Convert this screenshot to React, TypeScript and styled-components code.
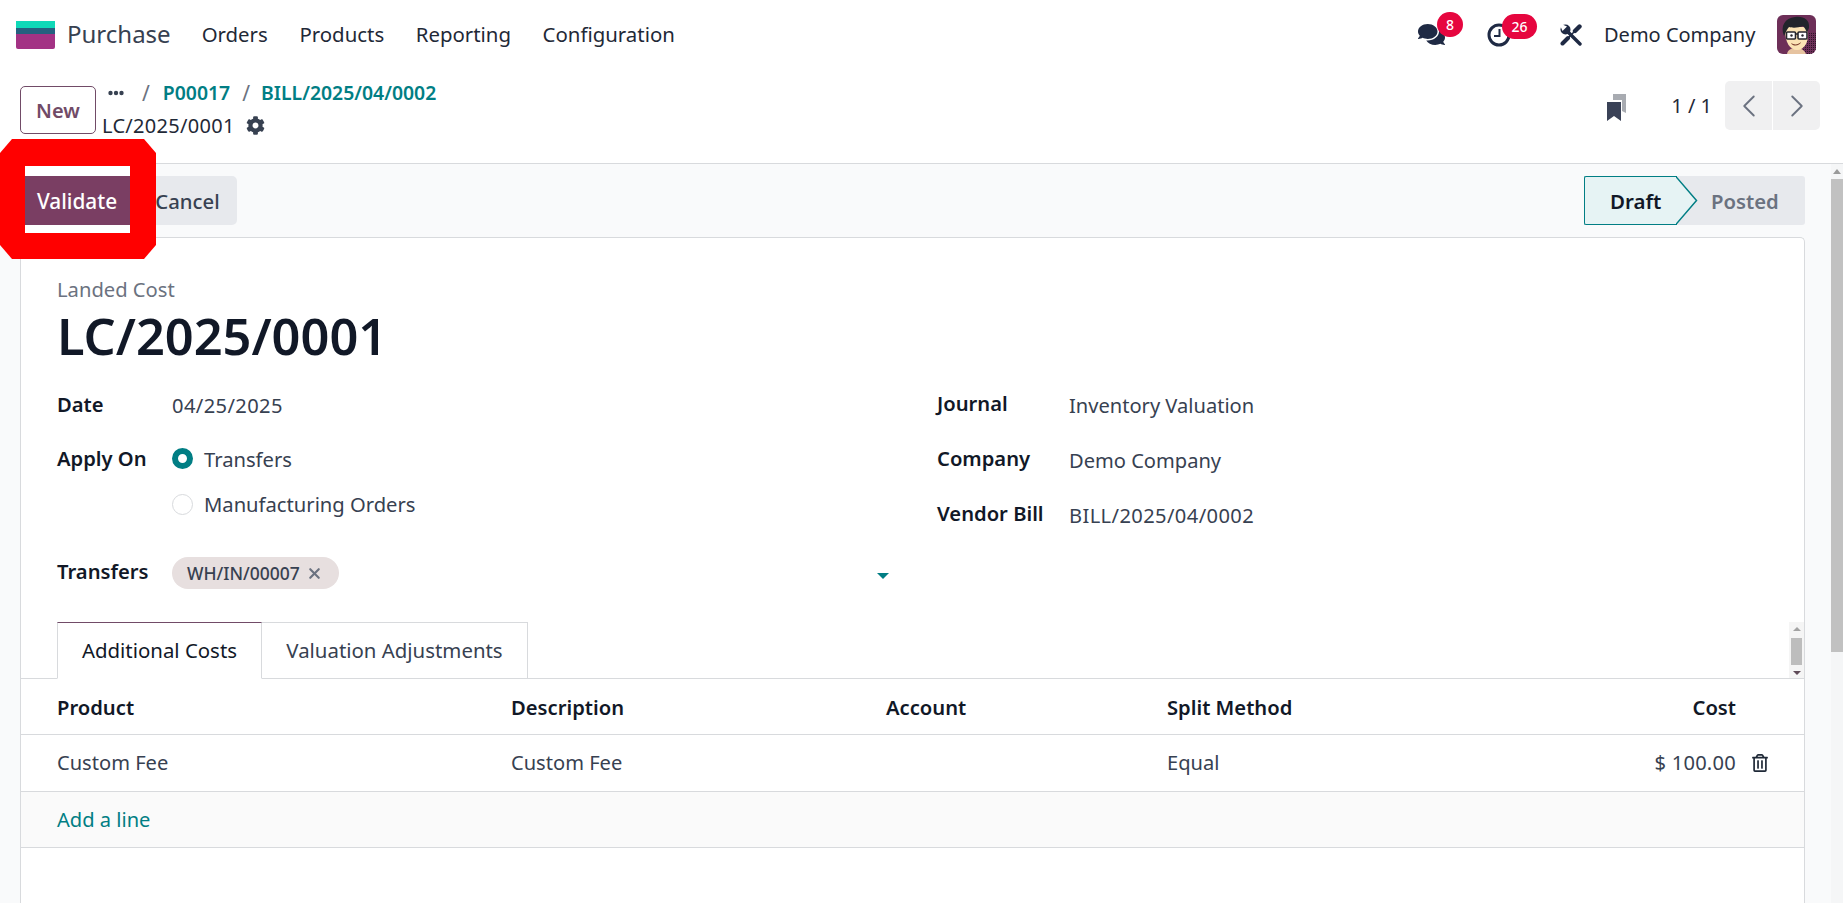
import React from "react";
import styled, { createGlobalStyle } from "styled-components";
import { FaComments, FaCog, FaRegTrashAlt } from "react-icons/fa";
import { ChevronLeft, ChevronRight, X } from "lucide-react";

const Global = createGlobalStyle`
  html, body { margin: 0; padding: 0; height: 100%; overflow: hidden; background: #fff; }
  body { font-family: "Noto Sans", "Open Sans", sans-serif; font-size: 20px; color: #374151; }
  * { box-sizing: border-box; }
`;

const Page = styled.div`
  width: 1843px; height: 903px; display: flex; flex-direction: column; overflow: hidden; position: relative;
`;

/* top navigation */
const NavBar = styled.header`
  height: 66px; flex: none; display: flex; align-items: center; padding: 3px 27px 0 16px; background: #fff;
`;
const BrandName = styled.span`
  font-size: 24px; color: #374151; margin-left: 12px; margin-right: 31px; margin-bottom: 2px;
`;
const MenuItem = styled.span`
  font-size: 20.4px; color: #1f2937; margin-right: 31.6px; margin-bottom: 2px;
`;
const NavRight = styled.div`
  margin-left: auto; display: flex; align-items: center; height: 100%;
`;
const IconHolder = styled.div<{ $w: number; $ml: number }>`
  position: relative; width: ${p => p.$w}px; margin-left: ${p => p.$ml}px; display: flex; color: #1f2a44;
`;
const Badge = styled.span<{ $left: number; $w: number }>`
  position: absolute; left: ${p => p.$left}px; top: -9px; width: ${p => p.$w}px; height: 25px; border-radius: 13px;
  background: #e6063f; color: #fff; font-size: 14px; font-weight: 500; display: flex; align-items: center; justify-content: center;
`;
const CompanyName = styled.span`
  margin-left: 22px; margin-right: 23px; font-size: 20px; color: #1f2937; width: 150px; white-space: nowrap;
`;

/* control panel */
const ControlPanel = styled.div`
  height: 98px; flex: none; display: flex; align-items: flex-start; padding: 10px 23px 0 20px;
  border-bottom: 1px solid #d8dadd; background: #fff;
`;
const NewButton = styled.button`
  width: 76px; height: 48px; margin-top: 10px; background: #fff; border: 1px solid #714b67; border-radius: 5px;
  color: #714b67; font: 600 20px "Noto Sans", sans-serif; padding: 0;
`;
const Crumbs = styled.div`
  margin-left: 6px; display: flex; flex-direction: column;
`;
const CrumbRow = styled.div`
  display: flex; align-items: center; height: 33px;
`;
const CrumbSep = styled.span<{ $ml: number; $mr: number }>`
  color: #6b7280; font-size: 21px; margin: 0 ${p => p.$mr}px 0 ${p => p.$ml}px;
`;
const CrumbLink = styled.span`
  color: #017e84; font-size: 19.4px; font-weight: 600;
`;
const CrumbCurrent = styled.span`
  color: #1f2937; font-size: 20px; letter-spacing: 0.3px;
`;
const PanelRight = styled.div`
  margin-left: auto; margin-top: 5px; display: flex; align-items: center; height: 49px;
`;
const PagerText = styled.span`
  font-size: 20px; color: #1f2937; margin: 0 13px 0 45px;
`;
const PagerGroup = styled.div`
  display: flex; gap: 1px; width: 95px; height: 49px;
`;
const PagerButton = styled.div<{ $side: "l" | "r" }>`
  flex: 1; background: #f0f0f1; display: flex; align-items: center; justify-content: center; color: #6b7280;
  border-radius: ${p => (p.$side === "l" ? "5px 0 0 5px" : "0 5px 5px 0")};
`;

/* content */
const ContentArea = styled.div`
  flex: 1; min-height: 0; display: flex; background: #f9fafb;
`;
const Main = styled.main`
  flex: 1; min-width: 0; display: flex; flex-direction: column; padding: 0 26px 0 20px;
`;
const Scrollbar = styled.div`
  width: 12px; flex: none; background: #f5f6f7; display: flex; flex-direction: column; align-items: center;
`;
const ScrollUp = styled.div`
  height: 15px; width: 12px; display: flex; align-items: center; justify-content: center;
  &::before { content: ""; border: 4px solid transparent; border-top: 0; border-bottom: 5px solid #9a9a9a; }
`;
const ScrollThumb = styled.div`
  width: 12px; height: 473px; background: #c1c1c1;
`;
const StatusBar = styled.div`
  height: 73px; flex: none; display: flex; align-items: flex-start; padding-top: 12px;
`;
const ValidateButton = styled.button`
  width: 114px; height: 49px; background: #7a3e63; color: #fff; border: 0; padding: 0;
  font: 500 20.8px "Noto Sans", sans-serif; box-shadow: 0 -10px 0 #fff, 0 8px 0 #fff;
`;
const CancelButton = styled.button`
  width: 103px; height: 49px; background: #e7e9ed; color: #374151; border: 0; border-radius: 0 5px 5px 0; padding: 0 0 0 4px;
  font: 500 20.3px "Noto Sans", sans-serif;
`;
const StatusTrack = styled.div`
  margin-left: auto; display: flex; height: 49px;
`;
const StatusActive = styled.div`
  position: relative; width: 93px; background: #e6f3f4; border: 1.5px solid #017e84; border-right: 0;
  border-radius: 2px 0 0 2px; display: flex; align-items: center; padding-left: 25px;
  color: #111827; font-weight: 600; font-size: 20.5px;
`;
const StatusTip = styled.svg`
  position: absolute; left: 91px; top: -1.5px; width: 22px; height: 49px;
`;
const StatusIdle = styled.div`
  width: 128px; background: #e7e9ed; border-radius: 0 3px 3px 0; display: flex; align-items: center; padding-left: 34px;
  color: #6b7280; font-weight: 600; font-size: 20.3px;
`;
const Card = styled.section`
  flex: 1; min-height: 0; background: #fff; border: 1px solid #d8dadd; border-bottom: 0; border-radius: 5px 5px 0 0;
  display: flex; flex-direction: column; position: relative;
`;
const Head = styled.div`
  padding: 39px 36px 0; height: 132px; flex: none;
`;
const Eyebrow = styled.div`
  font-size: 20.2px; line-height: 24px; margin-bottom: 2px; color: #6b7280;
`;
const Title = styled.h1`
  margin: 0; font-size: 50.5px; line-height: 66px; font-weight: 600; color: #111827;
`;
const Groups = styled.div`
  display: grid; grid-template-columns: 880px 1fr; padding: 0 36px; height: 252px; flex: none;
`;
const Column = styled.div`
  display: flex; flex-direction: column;
`;
const FieldRow = styled.div<{ $h: number; $lw: number }>`
  display: grid; grid-template-columns: ${p => p.$lw}px 1fr; height: ${p => p.$h}px; align-items: center;
`;
const Label = styled.span`
  font-size: 20.2px; font-weight: 600; color: #111827; transform: translateY(-2px);
`;
const Value = styled.span<{ $numeric?: boolean }>`
  font-size: 20.1px; color: #374151; letter-spacing: ${p => (p.$numeric ? "0.4px" : "0")};
`;
const RadioLine = styled.label`
  display: flex; align-items: center; gap: 11px; font-size: 20.2px; color: #374151; transform: translateY(-1px);
`;
const RadioDot = styled.span<{ $on?: boolean }>`
  width: 21px; height: 21px; border-radius: 50%; background: #fff; flex: none;
  border: ${p => (p.$on ? "6px solid #017e84" : "1px solid #d8dadd")};
`;
const TransferValue = styled.div`
  display: flex; align-items: center; justify-content: space-between; width: 717px;
`;
const Chip = styled.span`
  height: 32px; width: 167px; border-radius: 16px; background: #e7dfdf; padding: 0 0 0 15px; display: inline-flex; align-items: center; gap: 6px;
  font-size: 17.5px; color: #374151; font-weight: 500; white-space: nowrap;
`;
const Caret = styled.span`
  border: 6px solid transparent; border-top: 6px solid #017e84; border-bottom: 0; margin-top: 6px;
`;
const TabStrip = styled.div`
  height: 57px; flex: none; display: flex; padding-left: 36px; border-bottom: 1px solid #d8dadd; position: relative;
`;
const Tab = styled.div<{ $active?: boolean }>`
  height: 57px; display: flex; align-items: center; justify-content: center; padding-bottom: 2px;
  font-size: 20.4px; color: ${p => (p.$active ? "#111827" : "#374151")};
  width: ${p => (p.$active ? 205 : 266)}px;
  border: 1px solid #d8dadd; border-left-width: ${p => (p.$active ? 1 : 0)}px;
  border-top-color: ${p => (p.$active ? "#714b67" : "#d8dadd")};
  border-bottom-color: ${p => (p.$active ? "#fff" : "#d8dadd")};
`;
const MiniScroll = styled.div`
  position: absolute; right: 0; top: 0; width: 15px; height: 56px; background: #f5f5f5;
  display: flex; flex-direction: column; align-items: center; justify-content: space-between; padding: 5px 0 3px;
`;
const MiniThumb = styled.div`
  width: 11px; height: 27px; background: #bdbdbd;
`;
const ArrowUp = styled.span`
  border: 4px solid transparent; border-top: 0; border-bottom: 4px solid #a3a3a3;
`;
const ArrowDown = styled.span`
  border: 4px solid transparent; border-bottom: 0; border-top: 4px solid #5f4b58;
`;
const TableRow = styled.div<{ $muted?: boolean; $h?: number }>`
  height: ${p => p.$h ?? 57}px; flex: none; display: grid; grid-template-columns: 454px 375px 281px 1fr auto 33px; align-items: center;
  padding: 0 35px 0 36px; border-bottom: 1px solid #d8dadd; background: ${p => (p.$muted ? "#fafafa" : "#fff")};
`;
const HeadCell = styled.span`
  font-size: 20.2px; font-weight: 600; color: #111827;
`;
const Cell = styled.span<{ $numeric?: boolean }>`
  font-size: 20.1px; color: #374151; margin-bottom: 2px; letter-spacing: ${p => (p.$numeric ? "0.25px" : "0")};
`;
const TrashSlot = styled.span`
  display: flex; justify-content: flex-end; color: #1f2937;
`;
const AddLine = styled.span`
  font-size: 20.1px; color: #017e84; grid-column: 1 / -1;
`;

/* red annotation drawn over the page */
const Annotation = styled.div`
  position: absolute; left: 0; top: 139px; width: 156px; height: 120px; border-style: solid; border-color: #ff0000;
  border-width: 27px 26px 26px 25px; pointer-events: none;
  clip-path: polygon(12px 0, 144px 0, 156px 14px, 156px 106px, 144px 120px, 12px 120px, 0 106px, 0 14px);
`;

const Logo = () => (
  <svg width="39" height="28" viewBox="0 0 39 28" style={{ flex: "none" }}>
    <path d="M0 0h39v7H0z" fill="#0fd9b8" />
    <path d="M0 7h39v6H0z" fill="#25607f" />
    <path d="M0 13h39v13a2 2 0 0 1-2 2H2a2 2 0 0 1-2-2z" fill="#a33284" />
  </svg>
);

const ClockIcon = () => (
  <svg width="24" height="24" viewBox="0 0 24 24">
    <circle cx="12" cy="12" r="10" fill="none" stroke="#1f2a44" strokeWidth="3" />
    <path d="M12.5 6v7H7" fill="none" stroke="#1f2a44" strokeWidth="2" />
  </svg>
);

const ToolsIcon = () => (
  <svg width="22" height="22" viewBox="0 0 22 22">
    <path d="M5 5L20 20" stroke="#1f2a44" strokeWidth="3.4" strokeLinecap="round" />
    <circle cx="5.5" cy="5.5" r="5" fill="#1f2a44" />
    <path d="M-1 -1L7 2.5L2.5 7z" fill="#fff" />
    <path d="M19.5 2.5L15 7" stroke="#1f2a44" strokeWidth="4.4" strokeLinecap="round" />
    <path d="M15 7L8 14" stroke="#1f2a44" strokeWidth="1.6" />
    <path d="M8 14L2.5 19.5" stroke="#1f2a44" strokeWidth="4" strokeLinecap="round" />
  </svg>
);

const BookmarkIcon = () => (
  <svg width="19" height="27" viewBox="0 0 19 27" style={{ flex: "none", marginTop: 4 }}>
    <path d="M6 0h13v19l-4-2V6H6z" fill="#a8abb1" />
    <path d="M0 8h14v19l-7-5-7 5z" fill="#3a4257" />
  </svg>
);

const Dots = () => (
  <svg width="16" height="6" viewBox="0 0 16 6" style={{ flex: "none", marginLeft: 6 }}>
    <circle cx="2.5" cy="3" r="2.2" fill="#374151" />
    <circle cx="8" cy="3" r="2.2" fill="#374151" />
    <circle cx="13.5" cy="3" r="2.2" fill="#374151" />
  </svg>
);

const Avatar = () => (
  <svg width="39" height="39" viewBox="0 0 39 39" style={{ flex: "none", borderRadius: 6 }}>
    <defs>
      <pattern id="ht" width="2" height="2" patternUnits="userSpaceOnUse">
        <rect width="1" height="1" fill="#2d1626" />
      </pattern>
    </defs>
    <rect width="39" height="39" fill="#6d2f58" />
    <rect x="26" y="18" width="13" height="21" fill="url(#ht)" />
    <path d="M10 39c1-5 5-6 9-6s8 1 10 6z" fill="#e6c3a0" />
    <path d="M8 16c0 11 5 19 12 19s11-7 11-15c0-5-2-8-5-8H12c-2 0-4 2-4 4z" fill="#fbe3b4" />
    <path d="M7 21C3 11 8 3 18 2c8-1 15 2 14 11l-2 5c-1-3-2-5-4-7-5 2-11 2-14 1-2 2-3 5-5 9z" fill="#22242b" />
    <rect x="9.5" y="17" width="9" height="7" rx="1" fill="#fff" stroke="#26262c" strokeWidth="1.6" />
    <rect x="21" y="17" width="9" height="7" rx="1" fill="#fff" stroke="#26262c" strokeWidth="1.6" />
    <path d="M18.5 19h2.5" stroke="#26262c" strokeWidth="1.4" />
    <circle cx="14.5" cy="20.5" r="1.2" fill="#26262c" />
    <circle cx="25.5" cy="20.5" r="1.2" fill="#26262c" />
    <path d="M14 28c3 2 7 2 10-1-1 4-8 5-10 1z" fill="#7a3b2b" />
  </svg>
);

export default function App() {
  return (
    <Page>
      <Global />
      <NavBar>
        <Logo />
        <BrandName>Purchase</BrandName>
        <MenuItem>Orders</MenuItem>
        <MenuItem>Products</MenuItem>
        <MenuItem>Reporting</MenuItem>
        <MenuItem>Configuration</MenuItem>
        <NavRight>
          <IconHolder $w={27} $ml={0}>
            <FaComments size={27} />
            <Badge $left={19} $w={26}>8</Badge>
          </IconHolder>
          <IconHolder $w={24} $ml={42}>
            <ClockIcon />
            <Badge $left={15} $w={35}>26</Badge>
          </IconHolder>
          <IconHolder $w={22} $ml={49}>
            <ToolsIcon />
          </IconHolder>
          <CompanyName>Demo Company</CompanyName>
          <Avatar />
        </NavRight>
      </NavBar>

      <ControlPanel>
        <NewButton>New</NewButton>
        <Crumbs>
          <CrumbRow>
            <Dots />
            <CrumbSep $ml={18} $mr={13}>/</CrumbSep>
            <CrumbLink>P00017</CrumbLink>
            <CrumbSep $ml={12} $mr={11}>/</CrumbSep>
            <CrumbLink>BILL/2025/04/0002</CrumbLink>
          </CrumbRow>
          <CrumbRow>
            <CrumbCurrent>LC/2025/0001</CrumbCurrent>
            <FaCog size={19} color="#374151" style={{ marginLeft: 11 }} />
          </CrumbRow>
        </Crumbs>
        <PanelRight>
          <BookmarkIcon />
          <PagerText>1 / 1</PagerText>
          <PagerGroup>
            <PagerButton $side="l"><ChevronLeft size={38} strokeWidth={1.2} /></PagerButton>
            <PagerButton $side="r"><ChevronRight size={38} strokeWidth={1.2} /></PagerButton>
          </PagerGroup>
        </PanelRight>
      </ControlPanel>

      <ContentArea>
        <Main>
          <StatusBar>
            <ValidateButton>Validate</ValidateButton>
            <CancelButton>Cancel</CancelButton>
            <StatusTrack>
              <StatusActive>
                Draft
                <StatusTip viewBox="0 0 22 49">
                  <path d="M0 0.7L20.5 24.5L0 48.3" fill="#e6f3f4" stroke="#017e84" strokeWidth="1.5" />
                </StatusTip>
              </StatusActive>
              <StatusIdle>Posted</StatusIdle>
            </StatusTrack>
          </StatusBar>
          <Card>
            <Head>
              <Eyebrow>Landed Cost</Eyebrow>
              <Title>LC/2025/0001</Title>
            </Head>
            <Groups>
              <Column>
                <FieldRow $h={71} $lw={115}>
                  <Label>Date</Label>
                  <Value $numeric>04/25/2025</Value>
                </FieldRow>
                <FieldRow $h={37} $lw={115}>
                  <Label>Apply On</Label>
                  <RadioLine><RadioDot $on />Transfers</RadioLine>
                </FieldRow>
                <FieldRow $h={54} $lw={115}>
                  <span />
                  <RadioLine><RadioDot />Manufacturing Orders</RadioLine>
                </FieldRow>
                <FieldRow $h={82} $lw={115}>
                  <Label>Transfers</Label>
                  <TransferValue>
                    <Chip>WH/IN/00007<X size={17} strokeWidth={3} color="#6b7280" /></Chip>
                    <Caret />
                  </TransferValue>
                </FieldRow>
              </Column>
              <Column>
                <FieldRow $h={70} $lw={132}>
                  <Label>Journal</Label>
                  <Value>Inventory Valuation</Value>
                </FieldRow>
                <FieldRow $h={40} $lw={132}>
                  <Label>Company</Label>
                  <Value>Demo Company</Value>
                </FieldRow>
                <FieldRow $h={70} $lw={132}>
                  <Label>Vendor Bill</Label>
                  <Value $numeric>BILL/2025/04/0002</Value>
                </FieldRow>
              </Column>
            </Groups>
            <TabStrip>
              <Tab $active>Additional Costs</Tab>
              <Tab>Valuation Adjustments</Tab>
              <MiniScroll>
                <ArrowUp />
                <MiniThumb />
                <ArrowDown />
              </MiniScroll>
            </TabStrip>
            <TableRow $h={56}>
              <HeadCell>Product</HeadCell>
              <HeadCell>Description</HeadCell>
              <HeadCell>Account</HeadCell>
              <HeadCell>Split Method</HeadCell>
              <HeadCell>Cost</HeadCell>
              <span />
            </TableRow>
            <TableRow>
              <Cell>Custom Fee</Cell>
              <Cell>Custom Fee</Cell>
              <Cell />
              <Cell>Equal</Cell>
              <Cell $numeric>$ 100.00</Cell>
              <TrashSlot><FaRegTrashAlt size={18} /></TrashSlot>
            </TableRow>
            <TableRow $muted $h={56}>
              <AddLine>Add a line</AddLine>
            </TableRow>
          </Card>
        </Main>
        <Scrollbar>
          <ScrollUp />
          <ScrollThumb />
        </Scrollbar>
      </ContentArea>
      <Annotation />
    </Page>
  );
}
